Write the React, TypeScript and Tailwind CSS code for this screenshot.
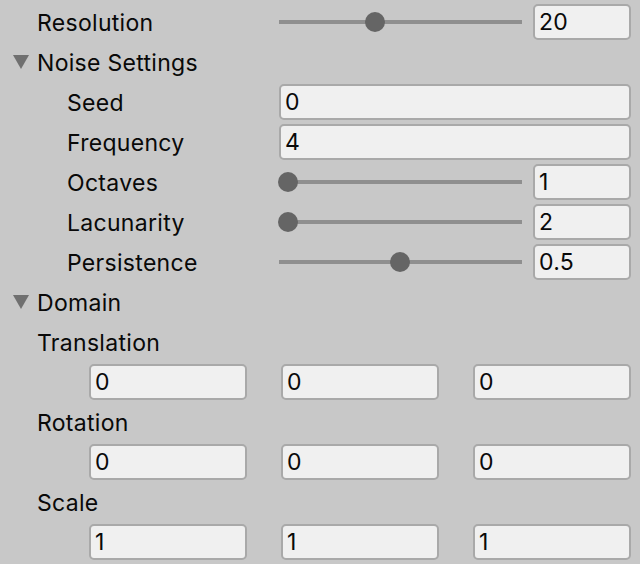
const font = "font-['Inter','Liberation_Sans',sans-serif]";

function Field({ value, className = "" }: { value: string; className?: string }) {
  return (
    <div className={`bg-[#f0f0f0] border-2 border-[#a9a9a9] rounded-[5px] h-[36px] flex items-center pl-[4px] pt-[1px] text-[23px] tracking-[0.3px] text-[#090909] ${className}`}>
      {value}
    </div>
  );
}

function Label({ text, indent }: { text: string; indent: number }) {
  return (
    <div className="w-[279px] shrink-0 pt-[2px] text-[23px] tracking-[0.3px] text-[#090909]" style={{ paddingLeft: indent }}>
      {text}
    </div>
  );
}

function SliderRow({ label, indent, value, pos }: { label: string; indent: number; value: string; pos: number }) {
  return (
    <div className="h-[40px] flex items-center pr-[9px]">
      <Label text={label} indent={indent} />
      <div className="relative w-[243px] h-[20px] flex items-center">
        <div className="w-full h-[4px] bg-[#8f8f8f]" />
        <div className="absolute top-0 w-[20px] h-[20px] rounded-full bg-[#656565]" style={{ left: pos - 279 - 10 }} />
      </div>
      <Field value={value} className="ml-[11px] w-[98px]" />
    </div>
  );
}

function FieldRow({ label, indent, value }: { label: string; indent: number; value: string }) {
  return (
    <div className="h-[40px] flex items-center pr-[9px]">
      <Label text={label} indent={indent} />
      <Field value={value} className="flex-1" />
    </div>
  );
}

function Foldout({ label }: { label: string }) {
  return (
    <div className="h-[40px] flex items-center pl-[12px] text-[23px] tracking-[0.3px] text-[#090909]">
      <svg width="18" height="16" viewBox="0 0 18 16" className="mr-[7px]">
        <polygon points="1,1 17,1 9,15" fill="#707070" />
      </svg>
      <span className="pt-[2px]">{label}</span>
    </div>
  );
}

function VectorRows({ label, value }: { label: string; value: string }) {
  return (
    <>
      <div className="h-[40px] flex items-center pl-[37px] pt-[2px] text-[23px] tracking-[0.3px] text-[#090909]">{label}</div>
      <div className="h-[40px] flex items-center gap-[34px] pl-[89px] pr-[9px]">
        <Field value={value} className="flex-1" />
        <Field value={value} className="flex-1" />
        <Field value={value} className="flex-1" />
      </div>
    </>
  );
}

export default function App() {
  return (
    <div className={`w-[640px] h-[564px] bg-[#c8c8c8] pt-[2px] overflow-hidden ${font}`}>
      <SliderRow label="Resolution" indent={37} value="20" pos={375} />
      <Foldout label="Noise Settings" />
      <FieldRow label="Seed" indent={67} value="0" />
      <FieldRow label="Frequency" indent={67} value="4" />
      <SliderRow label="Octaves" indent={67} value="1" pos={288} />
      <SliderRow label="Lacunarity" indent={67} value="2" pos={288} />
      <SliderRow label="Persistence" indent={67} value="0.5" pos={400} />
      <Foldout label="Domain" />
      <VectorRows label="Translation" value="0" />
      <VectorRows label="Rotation" value="0" />
      <VectorRows label="Scale" value="1" />
    </div>
  );
}
